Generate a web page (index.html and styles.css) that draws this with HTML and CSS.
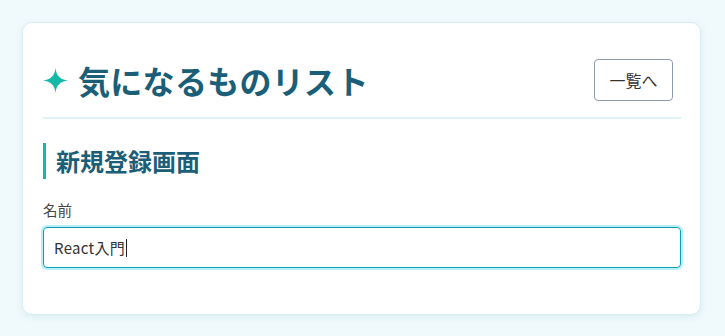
FILE: index.html
```html
<!DOCTYPE html>
<html lang="ja">
<head>
<meta charset="utf-8">
<link rel="stylesheet" href="styles.css">
</head>
<body>
<div class="page">
  <div class="card">
    <header class="header">
      <h1 class="title"><svg class="star" viewBox="0 0 24 24" width="25" height="25"><path d="M12 0 C12.8 7.5 16.5 11.2 24 12 C16.5 12.8 12.8 16.5 12 24 C11.2 16.5 7.5 12.8 0 12 C7.5 11.2 11.2 7.5 12 0 Z" fill="#14b8a6"/></svg>気になるものリスト</h1>
      <button class="back-btn">一覧へ</button>
    </header>
    <h2 class="section">新規登録画面</h2>
    <label class="label">名前</label>
    <div class="input"><span class="value">React入門</span><span class="caret"></span></div>
  </div>
</div>
</body>
</html>
```
FILE: styles.css
```css
* { box-sizing: border-box; }
html, body { margin: 0; padding: 0; }
body {
  background: #f0f9fb;
  font-family: "Noto Sans CJK JP", "Noto Sans", sans-serif;
  width: 725px;
  height: 336px;
  overflow: hidden;
}
.page { padding: 22px 24px 0 22px; }
.card {
  background: #fff;
  border: 1px solid #d8eef4;
  border-radius: 10px;
  box-shadow: 0 2px 6px rgba(120, 190, 210, 0.18);
  height: 293px;
  padding: 36px 19px 0 20px;
}
.header {
  display: flex;
  align-items: center;
  justify-content: space-between;
  padding: 0 8px 16px 0;
  border-bottom: 2px solid #e0f3f8;
}
.title {
  margin: 0;
  display: flex;
  align-items: center;
  font-size: 32px;
  font-weight: 700;
  color: #1a5e78;
  line-height: 42px;
  letter-spacing: 0.3px;
}
.star {
  display: block;
  margin-right: 10px;
  margin-top: 1px;
}
.back-btn {
  width: 79px;
  height: 42px;
  background: #fff;
  border: 1px solid #8c9bb0;
  border-radius: 4px;
  font-family: "Noto Sans CJK JP", sans-serif;
  font-size: 16px;
  color: #333;
  padding: 0;
}
.section {
  margin: 24px 0 0 0;
  border-left: 3px solid #14b8a6;
  padding-left: 10px;
  font-size: 24px;
  font-weight: 700;
  color: #1a5e78;
  line-height: 36px;
}
.label {
  display: block;
  margin-top: 21px;
  font-size: 14.5px;
  color: #444;
  line-height: 20px;
}
.input {
  margin-top: 7px;
  height: 41px;
  border: 1px solid #0e9fb8;
  border-radius: 4px;
  box-shadow: 0 0 0 2px #b8eff8;
  display: flex;
  align-items: center;
  padding-left: 10px;
  font-size: 15px;
  color: #333;
}
.value { letter-spacing: 0.3px; }
.caret {
  display: inline-block;
  width: 1px;
  height: 18px;
  background: #222;
  margin-left: 1px;
}
```
